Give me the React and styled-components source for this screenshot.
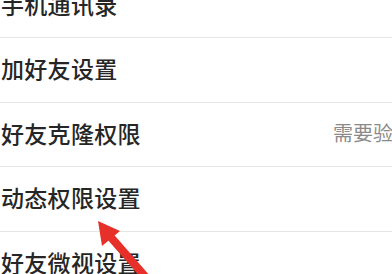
import React from 'react';
import styled, { createGlobalStyle } from 'styled-components';

const GlobalStyle = createGlobalStyle`
  html, body {
    margin: 0;
    padding: 0;
    background: #ffffff;
    overflow: hidden;
  }
`

const Screen = styled.div`
  position: relative;
  width: 392px;
  height: 274px;
  overflow: hidden;
  background: #ffffff;
  font-family: "Noto Sans CJK SC", "Noto Sans", sans-serif;
`

const List = styled.ul`
  list-style: none;
  margin: -26.5px 0 0;
  padding: 0;
`

const Row = styled.li`
  height: 64.5px;
  box-sizing: border-box;
  display: flex;
  align-items: center;
  justify-content: space-between;
  padding: 0 0 3px 1px;
  border-bottom: ${p => (p.$last ? 'none' : '1px solid #e6e6e6')};
  white-space: nowrap;
`

const Label = styled.span`
  font-size: 23px;
  font-weight: 500;
  color: #262626;
  letter-spacing: 0.3px;
`

const Value = styled.span`
  font-size: 20px;
  color: #8a8a8a;
  margin-right: -21px;
`

const Arrow = styled.svg`
  position: absolute;
  left: 0;
  top: 0;
  pointer-events: none;
`

const rows = [
  { label: '手机通讯录' },
  { label: '加好友设置' },
  { label: '好友克隆权限', value: '需要验证' },
  { label: '动态权限设置' },
  { label: '好友微视设置' },
]

const App = () => (
  <>
    <GlobalStyle />
    <Screen>
      <List>
        {rows.map((r, i) => (
          <Row key={r.label} $last={i === rows.length - 1}>
            <Label>{r.label}</Label>
            {r.value && <Value>{r.value}</Value>}
          </Row>
        ))}
      </List>
      <Arrow width="392" height="274" viewBox="0 0 392 274">
        <line x1="150" y1="282" x2="108" y2="234" stroke="#e8302a" strokeWidth="8" strokeLinecap="round" />
        <polygon points="98,221 120,231 102,246" fill="#e8302a" />
      </Arrow>
    </Screen>
  </>
);

export default App;
